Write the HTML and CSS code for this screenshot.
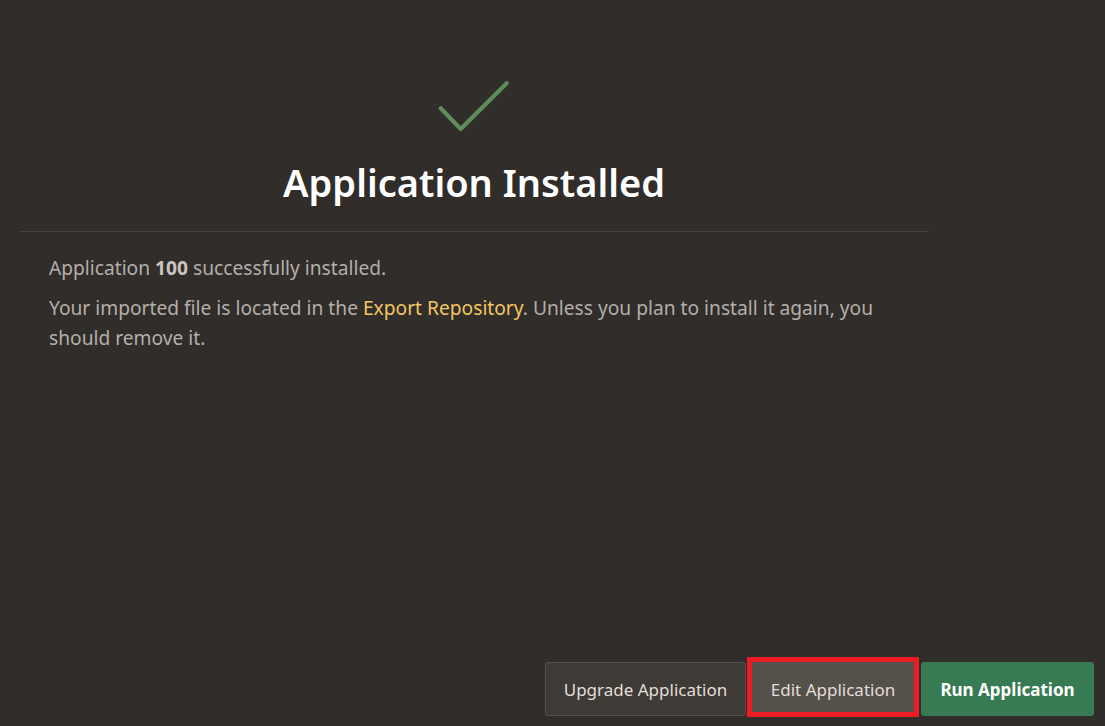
FILE: index.html
```html
<!DOCTYPE html>
<html lang="en">
<head>
<meta charset="utf-8">
<title>Application Installed</title>
<link rel="stylesheet" href="styles.css">
</head>
<body>
<div class="page">
  <main class="content">
    <header class="hero">
      <svg class="check" width="76" height="56" viewBox="0 0 76 56" aria-hidden="true">
        <polyline points="4.7,30.3 24.7,51 70.7,5.3" fill="none" stroke="#5f8c5c" stroke-width="4.2" stroke-linecap="round" stroke-linejoin="round"/>
      </svg>
      <h1 class="title">Application Installed</h1>
    </header>
    <div class="body">
      <p class="msg">Application <strong>100</strong> successfully installed.</p>
      <p class="msg">Your imported file is located in the <a class="link" href="#">Export Repository</a>. Unless you plan to install it again, you should remove it.</p>
    </div>
  </main>
  <footer class="footer">
    <button class="btn btn-secondary" type="button">Upgrade Application</button>
    <div class="highlight"><button class="btn btn-edit" type="button">Edit Application</button></div>
    <button class="btn btn-primary" type="button">Run Application</button>
  </footer>
</div>
</body>
</html>
```

FILE: styles.css
```css
html, body {
  margin: 0;
  padding: 0;
  background: #312d2a;
}
body {
  font-family: "Noto Sans", "Open Sans", sans-serif;
  color: #b3afaa;
}
.page {
  height: 726px;
  display: flex;
  flex-direction: column;
}
.content {
  width: 910px;
  margin-left: 19px;
  flex: 1;
}
.hero {
  display: flex;
  flex-direction: column;
  align-items: center;
  padding-top: 78px;
  padding-bottom: 24px;
  border-bottom: 1px solid #44403c;
}
.check {
  display: block;
}
.title {
  margin: 23px 0 0;
  font-size: 38px;
  font-weight: 600;
  line-height: 50px;
  color: #ffffff;
}
.body {
  padding: 21px 30px 0;
}
.msg {
  margin: 0 0 10px;
  font-size: 19.2px;
  line-height: 30px;
  max-width: 840px;
}
.msg strong {
  font-weight: 700;
  color: #c9c5c0;
}
.link {
  color: #f2c660;
  text-decoration: none;
}
.footer {
  display: flex;
  justify-content: flex-end;
  align-items: flex-end;
  padding: 0 11px 10px 0;
}
.btn {
  font-family: "Noto Sans", "Open Sans", sans-serif;
  font-size: 17px;
  height: 54px;
  border-radius: 3px;
  cursor: pointer;
  padding: 0;
}
.btn-secondary {
  width: 201px;
  background: #3e3a36;
  border: 1px solid #55504b;
  color: #e2ded9;
}
.highlight {
  margin-left: 1px;
  margin-bottom: -1px;
  width: 172px;
  height: 60px;
  box-sizing: border-box;
  border: 5px solid #ec1c24;
  background: #55504a;
  display: flex;
}
.btn-edit {
  flex: 1;
  height: auto;
  padding-top: 4px;
  background: transparent;
  border: none;
  border-radius: 0;
  color: #e2ded9;
}
.btn-primary {
  margin-left: 2px;
  width: 173px;
  background: #367b53;
  border: none;
  color: #ffffff;
  font-weight: 700;
}
```
